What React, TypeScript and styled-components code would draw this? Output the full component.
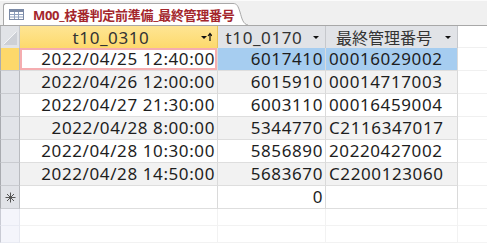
import React from "react";
import styled, { createGlobalStyle } from "styled-components";

// Datasheet view of the query, widths in px taken from the window
const COLS = "20px 198px 108px 132px 1fr";

const rows = [
    { date: "2022/04/25 12:40:00", num: "6017410", code: "00016029002" },
    { date: "2022/04/26 12:00:00", num: "6015910", code: "00014717003" },
    { date: "2022/04/27 21:30:00", num: "6003110", code: "00016459004" },
    { date: "2022/04/28 8:00:00", num: "5344770", code: "C2116347017" },
    { date: "2022/04/28 10:30:00", num: "5856890", code: "20220427002" },
    { date: "2022/04/28 14:50:00", num: "5683670", code: "C2200123060" },
];

const GlobalStyle = createGlobalStyle`
    html, body {
        margin: 0;
        padding: 0;
        background: #ffffff;
    }
    body {
        font-family: "Noto Sans", "Noto Sans CJK JP", sans-serif;
        color: #222222;
        overflow: hidden;
    }
`;

const Page = styled.div`
    width: 487px;
    height: 243px;
    display: flex;
    flex-direction: column;
    background: #ffffff;
`;

const TabStrip = styled.div`
    height: 23px;
    display: flex;
    align-items: flex-end;
    padding: 2px 0 0 3px;
    background: #f0f0f0;
    border-top: 1px solid #fbfbfb;
    border-bottom: 1px solid #a8a8a8;
`;

const Tab = styled.div`
    height: 22px;
    display: flex;
    align-items: center;
    gap: 9px;
    padding-left: 5px;
    box-sizing: border-box;
    background: #ffffff;
    border-left: 1px solid #a8a8a8;
    border-top: 1px solid #a8a8a8;
    border-top-left-radius: 3px;
`;

const TabTitle = styled.span`
    font-size: 13px;
    font-weight: 700;
    color: #a4262c;
    white-space: nowrap;
    letter-spacing: -0.3px;
    margin-right: -3px;
    position: relative;
    z-index: 1;
`;

const TabCurve = styled.svg`
    display: block;
    flex: none;
`;

const Row = styled.div<{ $shade?: boolean; $height?: number }>`
    display: grid;
    grid-template-columns: ${COLS};
    height: ${(p) => p.$height ?? 23}px;
    background: ${(p) => (p.$shade ? "#f2f2f2" : "#ffffff")};
`;

const HeaderCell = styled.div<{ $active?: boolean; $cjk?: boolean }>`
    display: flex;
    align-items: center;
    justify-content: center;
    position: relative;
    box-sizing: border-box;
    padding: 2px 15px 0 0;
    font-size: ${(p) => (p.$cjk ? 16 : 17)}px;
    letter-spacing: ${(p) => (p.$cjk ? 0 : 0.6)}px;
    line-height: 20px;
    color: #333333;
    border-right: 1px solid ${(p) => (p.$active ? "#e8c45c" : "#c6c8cc")};
    background: ${(p) => (p.$active ? "linear-gradient(#fee594, #fdd96c)" : "#e1e3e7")};
`;

const Corner = styled.div`
    box-sizing: border-box;
    background: #e1e3e7;
    border-left: 1px solid #b4b6ba;
    border-right: 1px solid #c6c8cc;
    display: flex;
    align-items: flex-end;
    justify-content: center;
    padding-bottom: 3px;
`;

const Selector = styled.div<{ $current?: boolean; $empty?: boolean }>`
    box-sizing: border-box;
    display: flex;
    align-items: center;
    justify-content: center;
    border-left: 1px solid ${(p) => (p.$empty ? "#c9cbd4" : "#a9abb0")};
    border-right: 1px solid ${(p) => (p.$empty ? "#e6e8f0" : "#b9bbc0")};
    border-bottom: 1px solid ${(p) => (p.$empty ? "#e9ebf3" : "#c9cbd0")};
    background: ${(p) => (p.$current ? "#fdd86a" : p.$empty ? "#f4f5fb" : "#e1e3e8")};
`;

const Cell = styled.div<{ $align?: "left" | "right"; $selected?: boolean; $focus?: boolean; $faint?: boolean }>`
    box-sizing: border-box;
    font-size: 17px;
    letter-spacing: 0.6px;
    line-height: 22px;
    white-space: nowrap;
    overflow: hidden;
    text-align: ${(p) => p.$align ?? "left"};
    padding: ${(p) => (p.$align === "right" ? "0 2px 0 0" : "0 0 0 3px")};
    color: #1e1e1e;
    border-right: 1px solid ${(p) => (p.$faint ? "#f2f2f2" : "#dadada")};
    border-bottom: 1px solid ${(p) => (p.$faint ? "#f2f2f2" : "#dedede")};
    background: ${(p) => (p.$selected ? "#a6cdf0" : p.$focus ? "#ffffff" : "transparent")};
    box-shadow: ${(p) => (p.$focus ? "inset 0 0 0 2px #f5adb0" : "none")};
`;

const Filler = styled.div<{ $faint?: boolean }>`
    border-bottom: 1px solid ${(p) => (p.$faint ? "#f4f4f4" : "#f0f0f0")};
    background: #ffffff;
`;

const DropArrow = styled.svg`
    position: absolute;
    top: 6px;
    right: 5px;
`;

function TableIcon() {
    return (
        <svg width="15" height="11" viewBox="0 0 15 11">
            <rect x="0.5" y="0.5" width="14" height="10" fill="#ffffff" stroke="#7b8aa6" />
            <rect x="1" y="1" width="13" height="2" fill="#7b8aa6" />
            <path d="M1 5.5H14M1 8H14M5.5 3V10M9.5 3V10" stroke="#8fa0bd" strokeWidth="1" />
        </svg>
    );
}

function SortArrows({ sorted }: { sorted?: boolean }) {
    return (
        <DropArrow width={sorted ? 12 : 8} height="10" viewBox={sorted ? "0 0 12 10" : "0 0 8 10"}>
            <path d="M1 4H7L4 7Z" fill="#111111" />
            {sorted && <path d="M10 9V2M8 4L10 1.5L12 4" stroke="#111111" strokeWidth="1.2" fill="none" />}
        </DropArrow>
    );
}

export default function App() {
    return (
        <>
            <GlobalStyle />
            <Page>
                <TabStrip>
                    <Tab>
                        <TableIcon />
                        <TabTitle>M00_枝番判定前準備_最終管理番号</TabTitle>
                    </Tab>
                    <TabCurve width="18" height="22" viewBox="0 0 18 22">
                        <path d="M0 0.5H2C6 0.5 7 3 9 9C11 16 12 21 17 22V23H0Z" fill="#ffffff" />
                        <path d="M0 0.5H2C6 0.5 7 3 9 9C11 16 12 21 17 22" fill="none" stroke="#a8a8a8" />
                    </TabCurve>
                </TabStrip>

                <Row $height={22}>
                    <Corner>
                        <svg width="14" height="14" viewBox="0 0 14 14">
                            <path d="M14 0V14H0Z" fill="#cdd0d6" />
                            <path d="M0.5 13.5L13.5 0.5" stroke="#f4f5f7" />
                        </svg>
                    </Corner>
                    <HeaderCell $active>
                        t10_0310
                        <SortArrows sorted />
                    </HeaderCell>
                    <HeaderCell>
                        t10_0170
                        <SortArrows />
                    </HeaderCell>
                    <HeaderCell $cjk>
                        最終管理番号
                        <SortArrows />
                    </HeaderCell>
                    <Filler />
                </Row>

                {rows.map((r, i) => (
                    <Row key={r.date} $shade={i % 2 === 1}>
                        <Selector $current={i === 0} />
                        <Cell $align="right" $focus={i === 0}>
                            {r.date}
                        </Cell>
                        <Cell $align="right" $selected={i === 0}>
                            {r.num}
                        </Cell>
                        <Cell $selected={i === 0}>{r.code}</Cell>
                        <Filler />
                    </Row>
                ))}

                {/* new record row */}
                <Row>
                    <Selector>
                        <svg width="11" height="11" viewBox="0 0 11 11">
                            <path d="M5.5 0.5V10.5M0.5 5.5H10.5M2 2L9 9M9 2L2 9" stroke="#555555" strokeWidth="1" />
                        </svg>
                    </Selector>
                    <Cell />
                    <Cell $align="right">0</Cell>
                    <Cell />
                    <Filler />
                </Row>

                {[0, 1].map((k) => (
                    <Row key={k}>
                        <Selector $empty />
                        <Cell $faint />
                        <Cell $faint />
                        <Cell $faint />
                        <Filler $faint />
                    </Row>
                ))}
            </Page>
        </>
    );
}
